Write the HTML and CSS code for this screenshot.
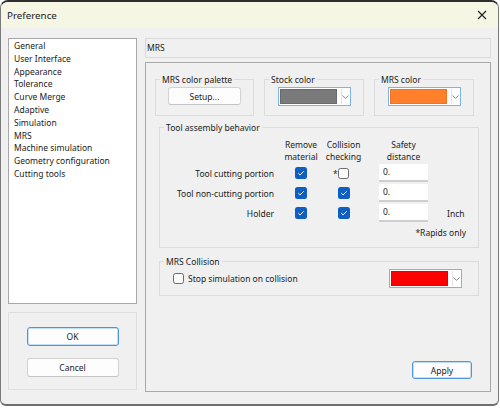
FILE: index.html
```html
<!DOCTYPE html>
<html>
<head>
<meta charset="utf-8">
<link rel="stylesheet" href="styles.css">
</head>
<body>
<div class="window">
  <div class="titlebar">
    <span class="title">Preference</span>
    <svg class="close" width="10" height="10" viewBox="0 0 10 10"><path d="M1 1 L9 9 M9 1 L1 9" stroke="#1f1f1f" stroke-width="1.1" fill="none"/></svg>
  </div>
  <div class="body">
    <div class="left">
      <ul class="nav">
        <li>General</li>
        <li>User Interface</li>
        <li>Appearance</li>
        <li>Tolerance</li>
        <li>Curve Merge</li>
        <li>Adaptive</li>
        <li>Simulation</li>
        <li>MRS</li>
        <li>Machine simulation</li>
        <li>Geometry configuration</li>
        <li>Cutting tools</li>
      </ul>
      <div class="btnbox">
        <button class="btn default dlg">OK</button>
        <button class="btn dlg">Cancel</button>
      </div>
    </div>
    <div class="right">
      <div class="header">MRS</div>
      <div class="panel">
        <div class="row-groups">
          <fieldset class="grp g-small g-first">
            <legend>MRS color palette</legend>
            <div class="grp-center"><button class="btn setup">Setup...</button></div>
          </fieldset>
          <fieldset class="grp g-small">
            <legend>Stock color</legend>
            <div class="grp-center">
              <div class="combo"><span class="swatch sw-gray"></span><span class="arrow"><svg width="7" height="4" viewBox="0 0 7 4"><path d="M0.5 0.5 L3.5 3.3 L6.5 0.5" stroke="#7a7a7a" stroke-width="0.9" fill="none"/></svg></span></div>
            </div>
          </fieldset>
          <fieldset class="grp g-small">
            <legend>MRS color</legend>
            <div class="grp-center">
              <div class="combo"><span class="swatch sw-orange"></span><span class="arrow"><svg width="7" height="4" viewBox="0 0 7 4"><path d="M0.5 0.5 L3.5 3.3 L6.5 0.5" stroke="#7a7a7a" stroke-width="0.9" fill="none"/></svg></span></div>
            </div>
          </fieldset>
        </div>

        <fieldset class="grp g-wide g-tool">
          <legend>Tool assembly behavior</legend>
          <div class="tool-grid">
            <div></div>
            <div class="colhead">Remove<br>material</div>
            <div class="colhead">Collision<br>checking</div>
            <div class="colhead safety">Safety<br>distance</div>
            <div></div>

            <div class="rowlabel">Tool cutting portion</div>
            <div class="cell"><span class="cb on"><svg width="12" height="12" viewBox="0 0 12 12"><path d="M3.3 6.2 L5.1 7.9 L8.7 4.3" stroke="#fff" stroke-width="1" fill="none"/></svg></span></div>
            <div class="cell"><span class="star">*</span><span class="cb off"></span></div>
            <div class="incell"><div class="num">0.</div></div>
            <div></div>

            <div class="rowlabel">Tool non-cutting portion</div>
            <div class="cell"><span class="cb on"><svg width="12" height="12" viewBox="0 0 12 12"><path d="M3.3 6.2 L5.1 7.9 L8.7 4.3" stroke="#fff" stroke-width="1" fill="none"/></svg></span></div>
            <div class="cell"><span class="cb on"><svg width="12" height="12" viewBox="0 0 12 12"><path d="M3.3 6.2 L5.1 7.9 L8.7 4.3" stroke="#fff" stroke-width="1" fill="none"/></svg></span></div>
            <div class="incell"><div class="num">0.</div></div>
            <div></div>

            <div class="rowlabel">Holder</div>
            <div class="cell"><span class="cb on"><svg width="12" height="12" viewBox="0 0 12 12"><path d="M3.3 6.2 L5.1 7.9 L8.7 4.3" stroke="#fff" stroke-width="1" fill="none"/></svg></span></div>
            <div class="cell"><span class="cb on"><svg width="12" height="12" viewBox="0 0 12 12"><path d="M3.3 6.2 L5.1 7.9 L8.7 4.3" stroke="#fff" stroke-width="1" fill="none"/></svg></span></div>
            <div class="incell"><div class="num">0.</div></div>
            <div class="unit">Inch</div>

            <div class="rapids">*Rapids only</div>
          </div>
        </fieldset>

        <fieldset class="grp g-wide g-coll">
          <legend>MRS Collision</legend>
          <div class="coll-row">
            <span class="cb off"></span>
            <span class="coll-label">Stop simulation on collision</span>
            <div class="combo combo-right"><span class="swatch sw-red"></span><span class="arrow"><svg width="7" height="4" viewBox="0 0 7 4"><path d="M0.5 0.5 L3.5 3.3 L6.5 0.5" stroke="#7a7a7a" stroke-width="0.9" fill="none"/></svg></span></div>
          </div>
        </fieldset>

        <button class="btn default apply">Apply</button>
      </div>
    </div>
  </div>
</div>
</body>
</html>
```

FILE: styles.css
```css
html, body {
  margin: 0;
  padding: 0;
}

body {
  background: #ffffff;
  font-family: "Noto Sans", "Open Sans", sans-serif;
  font-size: 8.5px;
  color: #1b1b1b;
}

.window {
  box-sizing: border-box;
  width: 499px;
  height: 406px;
  border: 1px solid #7a7a7a;
  border-top: 2px solid #2e2e2e;
  border-bottom: 2px solid #6e6e6e;
  border-radius: 8px 8px 6px 6px;
  background: #f0f0f0;
  display: flex;
  flex-direction: column;
  overflow: hidden;
}

.titlebar {
  height: 26px;
  flex: 0 0 26px;
  background: #f6f6e5;
  display: flex;
  align-items: center;
  justify-content: space-between;
  padding: 0 11px 0 6px;
}

.title {
  font-size: 9.8px;
  color: #1a1a1a;
}

.close {
  display: block;
}

.body {
  flex: 1;
  display: flex;
  gap: 8px;
  padding: 10px 7px 0 7px;
}

.left {
  width: 129px;
  display: flex;
  flex-direction: column;
  gap: 8px;
}

.nav {
  box-sizing: border-box;
  height: 266px;
  margin: 0;
  padding: 1px 0 0 5px;
  list-style: none;
  background: #ffffff;
  border: 1px solid #a8a8a8;
}

.nav li {
  line-height: 12.8px;
  white-space: nowrap;
}

.btnbox {
  box-sizing: border-box;
  height: 78px;
  border: 1px solid #dedede;
  display: flex;
  flex-direction: column;
  align-items: center;
  padding-top: 14px;
  gap: 12px;
}

.btn {
  box-sizing: border-box;
  font-family: inherit;
  font-size: 8.5px;
  color: #1b1b1b;
  background: #fdfdfd;
  border: 1px solid #d2d2d2;
  border-bottom-color: #c4c4c4;
  border-radius: 3px;
  padding: 0;
  margin: 0;
}

.btn.default {
  border: 1px solid #4f96dc;
  box-shadow: inset 0 0 0 1px #c3ddf6;
}

.dlg {
  width: 92px;
  height: 19px;
}

.right {
  width: 346px;
  display: flex;
  flex-direction: column;
  gap: 4px;
}

.header {
  box-sizing: border-box;
  height: 20px;
  border: 1px solid #dadada;
  padding-left: 1px;
  line-height: 18px;
}

.panel {
  box-sizing: border-box;
  height: 330px;
  border: 1px solid #a9a9a9;
  display: flex;
  flex-direction: column;
  padding: 10px 0 12px 9px;
}

.row-groups {
  display: flex;
  gap: 10px;
}

.grp {
  margin: 0;
  padding: 0;
  min-width: 0;
  border: 1px solid #dcdcdc;
}

.grp legend {
  margin-left: 4px;
  padding: 0 2px;
  line-height: 13px;
  font-size: 8.5px;
}

.g-small {
  box-sizing: border-box;
  width: 100px;
  flex: 0 0 100px;
}

.g-first {
  width: 99px;
  flex: 0 0 99px;
}

.grp-center {
  display: flex;
  justify-content: center;
  padding: 1px 0 9px;
}

.setup {
  width: 73px;
  height: 18px;
}

.combo {
  box-sizing: border-box;
  width: 73px;
  height: 19px;
  border: 1px solid #7db3e8;
  background: #ffffff;
  display: flex;
  padding: 1px;
}

.swatch {
  width: 57px;
  height: 100%;
  border: 1px solid #9a9a9a;
  box-sizing: border-box;
}

.sw-gray {
  background: #7a7a7a;
  border-color: #6a6a6a;
}

.sw-orange {
  background: #ff7f2a;
  border-color: #ef7420;
}

.sw-red {
  background: #ff0000;
  border-color: #e80000;
}

.arrow {
  margin-left: 4px;
  flex: 1;
  border-left: 1px solid #e4e4e4;
  display: flex;
  align-items: center;
  justify-content: center;
}

.g-wide {
  box-sizing: border-box;
  width: 320px;
  margin-left: 4px;
}

.g-tool {
  margin-top: 5px;
}

.tool-grid {
  display: grid;
  grid-template-columns: 115px 52px 33px 68px 1fr;
  grid-auto-rows: 20px;
  grid-template-rows: 24px;
  padding: 5px 0 4px;
}

.colhead {
  line-height: 12px;
  text-align: center;
  white-space: nowrap;
  justify-self: center;
}

.colhead.safety {
  justify-self: stretch;
  padding-left: 19px;
}

.rowlabel {
  text-align: right;
  align-self: center;
  white-space: nowrap;
  padding-right: 1px;
}

.cell {
  display: flex;
  align-items: center;
  justify-content: center;
}

.star {
  margin-left: -5px;
  width: 5px;
  font-size: 8.5px;
  line-height: 9px;
}

.cb {
  box-sizing: border-box;
  display: inline-block;
  width: 12px;
  height: 12px;
  border-radius: 2.5px;
}

.cb svg {
  display: block;
}

.cb.on {
  background: #0f5ec4;
}

.cb.off {
  width: 11px;
  height: 11px;
  background: #fafafa;
  border: 1px solid #6b6b6b;
}

.incell {
  padding-left: 19px;
  display: flex;
  align-items: center;
}

.num {
  box-sizing: border-box;
  width: 49px;
  height: 18px;
  background: #ffffff;
  border-bottom: 2px solid #cfcfcf;
  padding-left: 4px;
  line-height: 16px;
}

.unit {
  padding-left: 19px;
  align-self: center;
}

.rapids {
  grid-column: 1 / -1;
  justify-self: end;
  align-self: center;
  padding-right: 12px;
  height: 22px;
  line-height: 22px;
}

.g-coll {
  margin-top: 7px;
}

.coll-row {
  display: flex;
  align-items: center;
  padding: 1px 16px 7px 13px;
}

.coll-label {
  margin-left: 4px;
}

.combo-right {
  margin-left: auto;
}

.apply {
  margin-top: auto;
  align-self: flex-end;
  margin-right: 18px;
  width: 60px;
  height: 18px;
}
```
